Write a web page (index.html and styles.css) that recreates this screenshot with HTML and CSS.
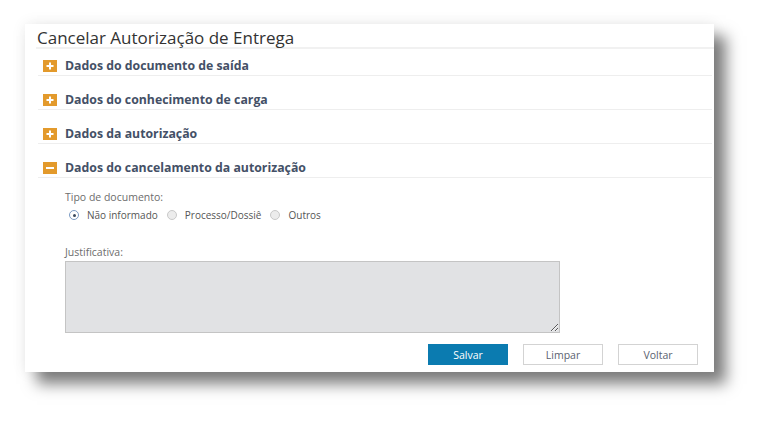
FILE: index.html
```html
<!DOCTYPE html>
<html lang="pt-BR">
<head>
<meta charset="utf-8">
<title>Cancelar Autorização de Entrega</title>
<link rel="stylesheet" href="styles.css">
</head>
<body>
<div class="card">
  <h1 class="title">Cancelar Autorização de Entrega</h1>
  <div class="sections">
    <div class="sec-head">
      <span class="toggle"><svg width="14" height="12" viewBox="0 0 14 12"><rect width="14" height="12" fill="#e39a2c"/><rect x="3.5" y="5" width="7" height="2" fill="#fff"/><rect x="6" y="2.5" width="2" height="7" fill="#fff"/></svg></span>
      <span class="sec-title">Dados do documento de saída</span>
    </div>
    <div class="sec-head">
      <span class="toggle"><svg width="14" height="12" viewBox="0 0 14 12"><rect width="14" height="12" fill="#e39a2c"/><rect x="3.5" y="5" width="7" height="2" fill="#fff"/><rect x="6" y="2.5" width="2" height="7" fill="#fff"/></svg></span>
      <span class="sec-title">Dados do conhecimento de carga</span>
    </div>
    <div class="sec-head">
      <span class="toggle"><svg width="14" height="12" viewBox="0 0 14 12"><rect width="14" height="12" fill="#e39a2c"/><rect x="3.5" y="5" width="7" height="2" fill="#fff"/><rect x="6" y="2.5" width="2" height="7" fill="#fff"/></svg></span>
      <span class="sec-title">Dados da autorização</span>
    </div>
    <div class="sec-head">
      <span class="toggle"><svg width="14" height="12" viewBox="0 0 14 12"><rect width="14" height="12" fill="#e39a2c"/><rect x="3" y="5" width="8" height="2" fill="#fff"/></svg></span>
      <span class="sec-title">Dados do cancelamento da autorização</span>
    </div>
  </div>
  <div class="body">
    <div class="label">Tipo de documento:</div>
    <div class="radios">
      <span class="radio checked"></span><span class="rlabel">Não informado</span>
      <span class="radio"></span><span class="rlabel">Processo/Dossiê</span>
      <span class="radio"></span><span class="rlabel">Outros</span>
    </div>
    <div class="label just">Justificativa:</div>
    <textarea class="area"></textarea>
    <div class="actions">
      <button class="btn primary">Salvar</button>
      <button class="btn">Limpar</button>
      <button class="btn">Voltar</button>
    </div>
  </div>
</div>
</body>
</html>
```
FILE: styles.css
```css
html, body {
  margin: 0;
  background: #ffffff;
}
body {
  padding: 24px 0 0 25px;
  min-height: 427px;
  box-sizing: border-box;
  font-family: "Open Sans", "Noto Sans", sans-serif;
}
.card {
  width: 689px;
  height: 348px;
  box-sizing: border-box;
  background: #ffffff;
  box-shadow: 12px 12px 14px rgba(0, 0, 0, 0.5), 0 0 14px rgba(0, 0, 0, 0.08);
  display: flex;
  flex-direction: column;
}
.title {
  margin: 0 0 0 11px;
  padding: 4px 0 0 1px;
  font-size: 17px;
  line-height: 19px;
  font-weight: 400;
  color: #333333;
  border-bottom: 2px solid #f1f1f1;
  height: 19px;
}
.sections {
  margin: 0 2px 0 13px;
  display: flex;
  flex-direction: column;
}
.sec-head {
  display: flex;
  align-items: center;
  height: 16px;
  padding: 16px 0 1px 0;
  border-bottom: 1px solid #eeeeee;
}
.sec-head:first-child {
  padding-top: 9px;
}
.toggle {
  display: flex;
  margin-left: 5px;
  width: 14px;
  height: 12px;
}
.sec-title {
  margin-left: 8px;
  font-size: 12.3px;
  font-weight: 700;
  color: #445066;
  line-height: 16px;
}
.body {
  padding: 12px 0 0 40px;
  display: flex;
  flex-direction: column;
}
.label {
  font-size: 10.5px;
  line-height: 14px;
  color: #6d6d6d;
}
.radios {
  display: flex;
  align-items: center;
  margin-top: 3px;
  height: 16px;
  font-size: 10px;
  color: #555555;
}
.radio {
  width: 8px;
  height: 8px;
  border: 1px solid #c9c9c9;
  border-radius: 50%;
  background: #ececec;
  margin-left: 4px;
  margin-right: 8px;
  position: relative;
}
.radio.checked {
  background: #ffffff;
  border-color: #7b9bc4;
}
.radio.checked::after {
  content: "";
  position: absolute;
  left: 2.5px;
  top: 2.5px;
  width: 3px;
  height: 3px;
  border-radius: 50%;
  background: #3b4a5e;
}
.rlabel {
  margin-right: 5px;
}
.just {
  margin-top: 22px;
}
.area {
  margin: 2px 0 0 0;
  width: 495px;
  height: 72px;
  box-sizing: border-box;
  background: #e1e2e4;
  border: 1px solid #c4c4c4;
  border-radius: 0;
  resize: both;
  padding: 0;
}
.actions {
  display: flex;
  justify-content: flex-end;
  gap: 15px;
  margin: 11px 16px 0 0;
}
.btn {
  width: 80px;
  height: 21px;
  box-sizing: border-box;
  border: 1px solid #d3d3d3;
  background: #ffffff;
  color: #5a6270;
  font-family: "Open Sans", "Noto Sans", sans-serif;
  font-size: 10.5px;
  padding: 0;
}
.btn.primary {
  background: #0b7bb0;
  border-color: #0b7bb0;
  color: #ffffff;
}
```
